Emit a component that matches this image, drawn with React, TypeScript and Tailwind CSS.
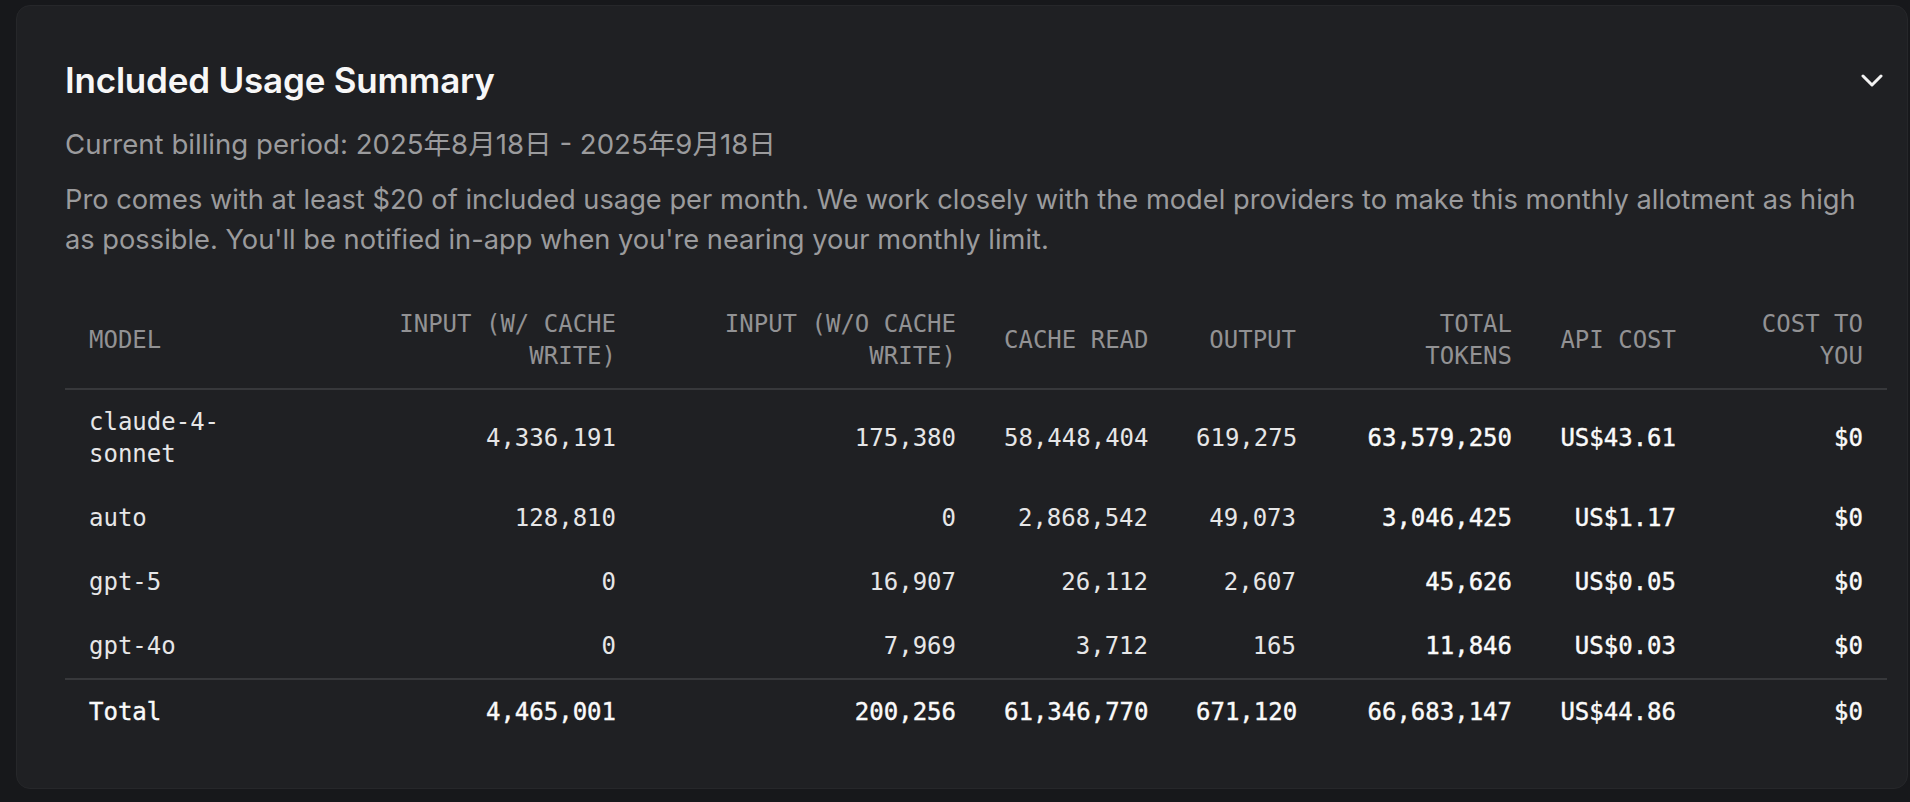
import React from "react";

type Row = {
  model: string;
  inW: string;
  inWo: string;
  cacheRead: string;
  output: string;
  total: string;
  api: string;
  cost: string;
};

const rows: Row[] = [
  { model: "claude-4-sonnet", inW: "4,336,191", inWo: "175,380", cacheRead: "58,448,404", output: "619,275", total: "63,579,250", api: "US$43.61", cost: "$0" },
  { model: "auto", inW: "128,810", inWo: "0", cacheRead: "2,868,542", output: "49,073", total: "3,046,425", api: "US$1.17", cost: "$0" },
  { model: "gpt-5", inW: "0", inWo: "16,907", cacheRead: "26,112", output: "2,607", total: "45,626", api: "US$0.05", cost: "$0" },
  { model: "gpt-4o", inW: "0", inWo: "7,969", cacheRead: "3,712", output: "165", total: "11,846", api: "US$0.03", cost: "$0" },
];

const totalRow: Row = { model: "Total", inW: "4,465,001", inWo: "200,256", cacheRead: "61,346,770", output: "671,120", total: "66,683,147", api: "US$44.86", cost: "$0" };

const strong = "text-[#fafafa] [-webkit-text-stroke:0.4px_#fafafa]";

export default function App() {
  return (
    <div className="min-h-[802px] w-full bg-[#17181b] pt-[5px] pl-4 overflow-hidden" style={{ fontFamily: "Inter, 'Noto Sans CJK SC', sans-serif" }}>
      <div className="w-[1892px] h-[784px] rounded-[14px] bg-[#1f2023] border border-[#26272a] pl-12 pr-[21px] pt-[54px]">
        <div className="flex items-center justify-between h-[40px]">
          <h2 className="text-[35px] leading-[40px] font-semibold text-[#f7f7f7] tracking-[-0.2px]">Included Usage Summary</h2>
          <svg width="22" height="14" viewBox="0 0 22 14" className="mr-[3px] mt-[2px]" aria-hidden="true">
            <polyline points="2,2 11,11 20,2" fill="none" stroke="#f2f2f2" strokeWidth="3" strokeLinecap="round" strokeLinejoin="round" />
          </svg>
        </div>
        <p className="mt-[24px] text-[27.6px] leading-[40px] text-[#9b9b9d]">
          Current billing period: 2025年8月18日 - 2025年9月18日
        </p>
        <p className="mt-[16px] text-[27.25px] leading-[40px] text-[#9b9b9d] pr-[16px]">
          Pro comes with at least $20 of included usage per month. We work closely with the model providers to make this monthly allotment as high as possible. You'll be notified in-app when you're nearing your monthly limit.
        </p>
        <table className="mt-[32px] w-[1822px] table-fixed border-collapse text-[24px] leading-[32px]" style={{ fontFamily: "'DejaVu Sans Mono', 'Liberation Mono', monospace" }}>
          <colgroup>
            <col className="w-[190px]" />
            <col className="w-[385px]" />
            <col className="w-[340px]" />
            <col className="w-[192px]" />
            <col className="w-[148px]" />
            <col className="w-[216px]" />
            <col className="w-[164px]" />
            <col className="w-[187px]" />
          </colgroup>
          <thead>
            <tr className="border-b-2 border-[#37383b] text-[#929294] uppercase">
              <th className="px-6 py-4 text-left font-normal align-middle">Model</th>
              <th className="px-6 py-4 text-right font-normal align-middle">Input (w/ cache<br />write)</th>
              <th className="px-6 py-4 text-right font-normal align-middle">Input (w/o cache<br />write)</th>
              <th className="px-6 py-4 text-right font-normal align-middle whitespace-nowrap">Cache read</th>
              <th className="px-6 py-4 text-right font-normal align-middle">Output</th>
              <th className="px-6 py-4 text-right font-normal align-middle">Total<br />tokens</th>
              <th className="px-6 py-4 text-right font-normal align-middle whitespace-nowrap">API cost</th>
              <th className="px-6 py-4 text-right font-normal align-middle">Cost to<br />you</th>
            </tr>
          </thead>
          <tbody>
            {rows.map((r, i) => (
              <tr key={r.model} className={i === rows.length - 1 ? "border-b-2 border-[#37383b]" : ""}>
                <td className="px-6 py-4 text-left text-[#e6e6e7] align-middle">{r.model === "claude-4-sonnet" ? <>claude-4-<br />sonnet</> : r.model}</td>
                <td className="px-6 py-4 text-right text-[#e6e6e7] align-middle">{r.inW}</td>
                <td className="px-6 py-4 text-right text-[#e6e6e7] align-middle">{r.inWo}</td>
                <td className="px-6 py-4 text-right text-[#e6e6e7] align-middle">{r.cacheRead}</td>
                <td className="px-6 py-4 text-right text-[#e6e6e7] align-middle">{r.output}</td>
                <td className={`px-6 py-4 text-right align-middle ${strong}`}>{r.total}</td>
                <td className={`px-6 py-4 text-right align-middle ${strong}`}>{r.api}</td>
                <td className={`px-6 py-4 text-right align-middle ${strong}`}>{r.cost}</td>
              </tr>
            ))}
            <tr className={strong}>
              <td className="px-6 py-4 text-left align-middle">{totalRow.model}</td>
              <td className="px-6 py-4 text-right align-middle">{totalRow.inW}</td>
              <td className="px-6 py-4 text-right align-middle">{totalRow.inWo}</td>
              <td className="px-6 py-4 text-right align-middle">{totalRow.cacheRead}</td>
              <td className="px-6 py-4 text-right align-middle">{totalRow.output}</td>
              <td className="px-6 py-4 text-right align-middle">{totalRow.total}</td>
              <td className="px-6 py-4 text-right align-middle">{totalRow.api}</td>
              <td className="px-6 py-4 text-right align-middle">{totalRow.cost}</td>
            </tr>
          </tbody>
        </table>
      </div>
    </div>
  );
}
